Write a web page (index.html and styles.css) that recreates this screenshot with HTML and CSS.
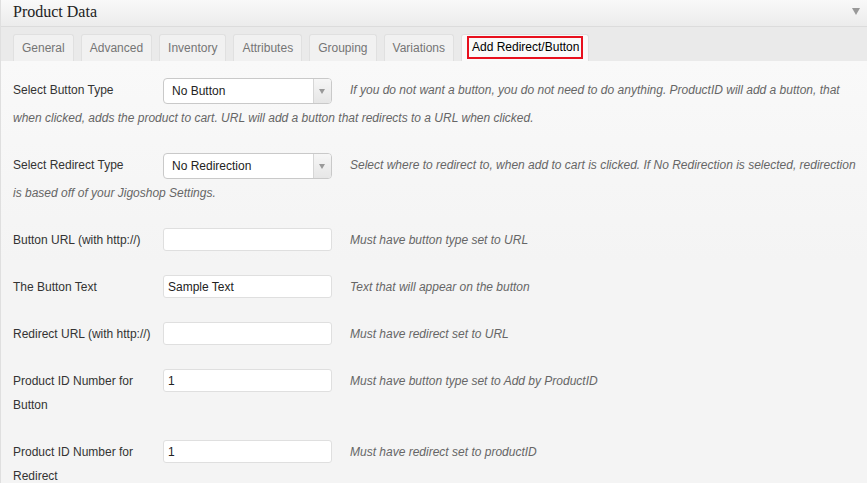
FILE: index.html
```html
<!DOCTYPE html>
<html>
<head>
<meta charset="utf-8">
<link rel="stylesheet" href="styles.css">
</head>
<body>
<div class="postbox">
  <div class="hndle">
    <h3 class="title">Product Data</h3>
    <span class="toggle"></span>
  </div>
  <ul class="tabs">
    <li class="tab">General</li>
    <li class="tab">Advanced</li>
    <li class="tab">Inventory</li>
    <li class="tab">Attributes</li>
    <li class="tab">Grouping</li>
    <li class="tab">Variations</li>
    <li class="tab active"><span class="mark">Add Redirect/Button</span></li>
  </ul>
  <div class="panel">
    <p class="field first">
      <label class="lbl">Select Button Type</label><span class="select"><span class="sel-text">No Button</span><span class="sel-arrow"></span></span><span class="desc">If you do not want a button, you do not need to do anything. ProductID will add a button, that when clicked, adds the product to cart. URL will add a button that redirects to a URL when clicked.</span>
    </p>
    <p class="field">
      <label class="lbl">Select Redirect Type</label><span class="select"><span class="sel-text">No Redirection</span><span class="sel-arrow"></span></span><span class="desc">Select where to redirect to, when add to cart is clicked. If No Redirection is selected, redirection is based off of your Jigoshop Settings.</span>
    </p>
    <p class="field">
      <label class="lbl">Button URL (with http://)</label><input class="text" type="text" value=""><span class="desc">Must have button type set to URL</span>
    </p>
    <p class="field">
      <label class="lbl">The Button Text</label><input class="text" type="text" value="Sample Text"><span class="desc">Text that will appear on the button</span>
    </p>
    <p class="field">
      <label class="lbl">Redirect URL (with http://)</label><input class="text" type="text" value=""><span class="desc">Must have redirect set to URL</span>
    </p>
    <p class="field tall">
      <label class="lbl two">Product ID Number for Button</label><input class="text" type="text" value="1"><span class="desc">Must have button type set to Add by ProductID</span>
    </p>
    <p class="field tall">
      <label class="lbl two">Product ID Number for Redirect</label><input class="text" type="text" value="1"><span class="desc">Must have redirect set to productID</span>
    </p>
  </div>
</div>
</body>
</html>
```
FILE: styles.css
```css
html, body {
  margin: 0;
  padding: 0;
  background: #f4f4f4;
}
body {
  font-family: "Liberation Sans", Arial, sans-serif;
  font-size: 12px;
  color: #333;
}
.postbox {
  width: 867px;
  border-left: 1px solid #dfdfdf;
  box-sizing: border-box;
}
.hndle {
  height: 26px;
  display: flex;
  align-items: center;
  justify-content: space-between;
  background: linear-gradient(#f9f9f9, #ececec);
  border-bottom: 1px solid #dcdcdc;
  padding: 0 7px 0 12px;
}
.title {
  margin: 0;
  font-family: "Liberation Serif", "Times New Roman", serif;
  font-weight: normal;
  font-size: 16px;
  color: #222;
  position: relative;
  top: -1px;
}
.toggle {
  width: 0;
  height: 0;
  border-left: 4px solid transparent;
  border-right: 4px solid transparent;
  border-top: 7px solid #999;
  margin-top: -4px;
}
.tabs {
  margin: 0;
  padding: 7px 0 0 12px;
  height: 34px;
  box-sizing: border-box;
  list-style: none;
  display: flex;
  gap: 7px;
  background: #eaeaea;
  align-items: flex-end;
}
.tab {
  height: 27px;
  box-sizing: border-box;
  padding: 0 8px;
  display: flex;
  align-items: center;
  background: #f1f1f1;
  border: 1px solid #e0e0e0;
  border-bottom: none;
  border-radius: 3px 3px 0 0;
  color: #757575;
  font-size: 12px;
}
.tab.active {
  background: #fafafa;
  color: #000;
  padding: 0 5px;
  align-items: flex-end;
}
.mark {
  border: 2px solid #e8101e;
  padding: 2px 2px 3px 3px;
  margin-bottom: 2px;
  line-height: 14px;
}
.panel {
  background: linear-gradient(#f9f9f9, #f4f4f4 200px);
  padding: 15px 5px 20px 12px;
}
.field {
  margin: 0 0 19px 0;
  line-height: 28px;
}
.field.tall {
  margin-bottom: 21px;
}
.lbl {
  display: inline-block;
  width: 150px;
  vertical-align: top;
  color: #333;
}
.lbl.two {
  line-height: 24px;
  margin-top: 2px;
  width: 140px;
  margin-right: 10px;
}
.select {
  display: inline-flex;
  vertical-align: middle;
  width: 169px;
  height: 26px;
  box-sizing: border-box;
  border: 1px solid #c9c9c9;
  border-radius: 4px;
  background: #fff;
  overflow: hidden;
  line-height: 24px;
}
.sel-text {
  flex: 1;
  padding-left: 8px;
  color: #222;
}
.sel-arrow {
  width: 17px;
  border-left: 1px solid #d6d6d6;
  background: linear-gradient(#f6f6f6, #e6e6e6);
  position: relative;
}
.sel-arrow::after {
  content: "";
  position: absolute;
  left: 5px;
  top: 10px;
  border-left: 3px solid transparent;
  border-right: 3px solid transparent;
  border-top: 5px solid #999;
}
.text {
  vertical-align: middle;
  width: 169px;
  height: 23px;
  box-sizing: border-box;
  border: 1px solid #dfdfdf;
  border-radius: 3px;
  background: #fff;
  margin: 0;
  padding: 0 4px;
  font-family: "Liberation Sans", Arial, sans-serif;
  font-size: 12px;
  color: #222;
  position: relative;
  top: -1px;
}
.desc {
  margin-left: 18px;
  font-style: italic;
  color: #666;
}
```
